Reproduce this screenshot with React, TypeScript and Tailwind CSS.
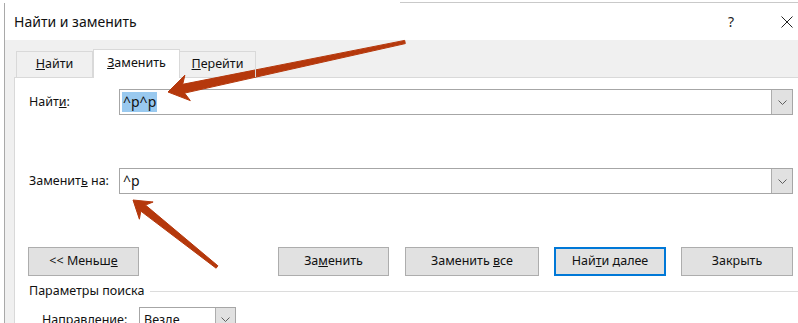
import React from 'react';

type Pt = [number, number];

// tapered arrow as a polygon: thin at the tail, wide at the head
function arrowPoints(tip: Pt, tail: Pt, headLen: number, headHalf: number, shaftHead: number, shaftTail: number) {
  const dx = tail[0] - tip[0];
  const dy = tail[1] - tip[1];
  const len = Math.hypot(dx, dy);
  const ux = dx / len;
  const uy = dy / len;
  const nx = -uy;
  const ny = ux;
  const base: Pt = [tip[0] + ux * headLen, tip[1] + uy * headLen];
  const neck: Pt = [tip[0] + ux * (headLen - 4), tip[1] + uy * (headLen - 4)];
  const pts: Pt[] = [
    tip,
    [base[0] + nx * headHalf, base[1] + ny * headHalf],
    [neck[0] + nx * shaftHead, neck[1] + ny * shaftHead],
    [tail[0] + nx * shaftTail, tail[1] + ny * shaftTail],
    [tail[0] - nx * shaftTail, tail[1] - ny * shaftTail],
    [neck[0] - nx * shaftHead, neck[1] - ny * shaftHead],
    [base[0] - nx * headHalf, base[1] - ny * headHalf],
  ];
  return pts.map(p => `${p[0].toFixed(1)},${p[1].toFixed(1)}`).join(' ');
}

function Chevron() {
  return (
    <svg width="9" height="5" viewBox="0 0 9 5" fill="none">
      <path d="M0.5 0.5 L4.5 4.5 L8.5 0.5" stroke="#5f5f5f" strokeWidth="1" />
    </svg>
  );
}

function ComboInput({ children }: { children?: React.ReactNode }) {
  return (
    <div className="flex h-[26px] w-[674px] border border-[#a6a6a6] bg-white">
      <div className="flex flex-1 items-center pl-[2px]">{children}</div>
      <div className="flex w-[21px] items-center justify-center border-l border-[#adadad] bg-[#e1e1e1]">
        <Chevron />
      </div>
    </div>
  );
}

function Btn({ children, className = '' }: { children: React.ReactNode; className?: string }) {
  return (
    <div className={`flex h-[29px] items-center justify-center bg-[#e1e1e1] ${className}`}>
      <span>{children}</span>
    </div>
  );
}

export default function App() {
  const arrowColor = '#b5380c';

  return (
    <div className="relative h-[323px] w-[798px] overflow-hidden bg-white font-[family-name:Noto_Sans,sans-serif] text-[12.5px] text-[#111]">
      {/* edge of the document behind the dialog */}
      <div className="h-[3px] pl-[400px] pt-[2px]">
        <div className="h-px bg-[#c9c9c9]" />
      </div>

      <div className="ml-[4px] flex h-[320px] flex-col border-l border-[#a9a9a9]">
        {/* title bar */}
        <div className="flex h-[37px] shrink-0 items-center bg-white pl-[9px]">
          <span className="text-[14px] text-[#111]">Найти и заменить</span>
          <span className="ml-auto mr-[47px] text-[14px] text-[#222]">?</span>
          <svg width="12" height="12" viewBox="0 0 12 12" className="mr-[5px]">
            <path d="M0.5 0.5 L11.5 11.5 M11.5 0.5 L0.5 11.5" stroke="#222" strokeWidth="1" />
          </svg>
        </div>

        {/* dialog body */}
        <div className="flex flex-1 flex-col bg-[#f0f0f0] pl-[9px] pt-[9px]">
          {/* tabs */}
          <div className="relative z-10 flex h-[28px] items-end">
            <div className="ml-[2px] flex h-[26px] w-[77px] items-center justify-center border border-b-0 border-[#d9d9d9]">
              <span><u>Н</u>айти</span>
            </div>
            <div className="-mb-px flex h-[29px] w-[87px] items-center justify-center border border-b-0 border-[#d9d9d9] bg-white pb-[2px]">
              <span><u>З</u>аменить</span>
            </div>
            <div className="flex h-[26px] w-[76px] items-center justify-center border border-b-0 border-l-0 border-[#d9d9d9]">
              <span><u>П</u>ерейти</span>
            </div>
          </div>

          {/* tab page */}
          <div className="flex flex-1 flex-col border border-r-0 border-[#d9d9d9] bg-white pl-[14px] pt-[11px]">
            <div className="flex items-center">
              <span className="w-[90px]">Найт<u>и</u>:</span>
              <ComboInput>
                <span className="bg-[#99c9ef] px-px text-[14px] leading-[20px]">^p^p</span>
              </ComboInput>
            </div>

            <div className="mt-[53px] flex items-center">
              <span className="w-[90px]">Заменит<u>ь</u> на:</span>
              <ComboInput>
                <span className="px-px text-[14px] leading-[20px]">^p</span>
              </ComboInput>
            </div>

            <div className="-ml-px mt-[53px] flex">
              <Btn className="w-[111px] border border-[#adadad]">&lt;&lt; Меньш<u>е</u></Btn>
              <Btn className="ml-[139px] w-[111px] border border-[#adadad]">За<u>м</u>енить</Btn>
              <Btn className="ml-[16px] w-[134px] border border-[#adadad]">Заменить <u>в</u>се</Btn>
              <Btn className="ml-[15px] w-[112px] border-2 border-[#0078d7]">Най<u>т</u>и далее</Btn>
              <Btn className="ml-[15px] w-[112px] border border-[#adadad]">Закрыть</Btn>
            </div>

            <div className="mt-[6px] flex items-center">
              <span>Параметры поиска</span>
              <div className="ml-[6px] h-px flex-1 bg-[#dcdcdc]" />
            </div>

            <div className="ml-[13px] mt-[6px] flex items-start">
              <span className="mt-[4px] w-[97px]">Направление:</span>
              <div className="flex h-[26px] w-[97px] border border-[#a6a6a6] bg-white">
                <span className="flex-1 pl-[4px] pt-[3px]">Везде</span>
                <div className="flex w-[20px] items-center justify-center border-l border-[#adadad] bg-[#e1e1e1]">
                  <Chevron />
                </div>
              </div>
            </div>
          </div>
        </div>
      </div>

      {/* annotation arrows */}
      <svg className="pointer-events-none absolute left-0 top-0" width="798" height="323" viewBox="0 0 798 323">
        <polygon points={arrowPoints([168, 92], [405, 42], 20, 13, 4.5, 1.6)} fill={arrowColor} stroke={arrowColor} strokeWidth="1" strokeLinejoin="round" />
        <polygon points={arrowPoints([133, 200], [217, 267], 17, 11, 3.8, 1.5)} fill={arrowColor} stroke={arrowColor} strokeWidth="1" strokeLinejoin="round" />
      </svg>
    </div>
  );
}
